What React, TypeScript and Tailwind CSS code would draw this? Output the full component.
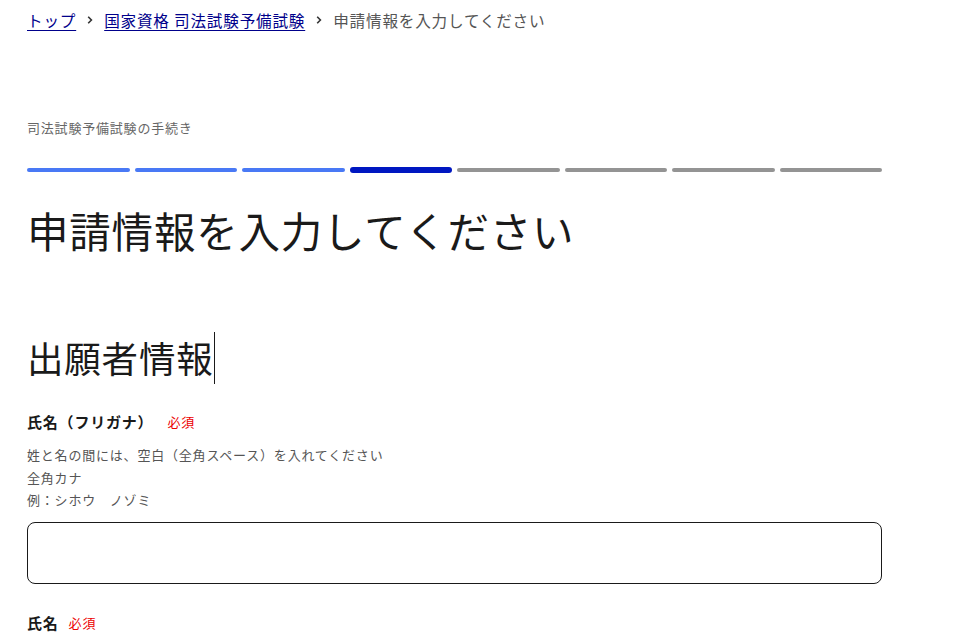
const steps = ["done", "done", "done", "current", "todo", "todo", "todo", "todo"];

function Chevron() {
  return (
    <svg width="8" height="10" viewBox="0 0 8 10" className="mx-[10px] shrink-0" aria-hidden>
      <path d="M2.2 1.8 5.4 5 2.2 8.2" fill="none" stroke="#333" strokeWidth="1.6" />
    </svg>
  );
}

function Required() {
  return <span className="text-[13px] text-[#ec0000] font-normal">必須</span>;
}

export default function App() {
  return (
    <div
      className="min-h-screen bg-white text-[#1a1a1a] tracking-[0.05em]"
      style={{ fontFamily: '"Noto Sans CJK JP", "Noto Sans", sans-serif' }}
    >
      <div className="w-[855px] ml-[27px]">
        <nav className="flex items-center pt-2 text-[15.6px] leading-6">
          <a href="#" className="text-[#00008b] underline underline-offset-[3px]">トップ</a>
          <Chevron />
          <a href="#" className="text-[#00008b] underline underline-offset-[3px]">国家資格 司法試験予備試験</a>
          <Chevron />
          <span className="text-[#555]">申請情報を入力してください</span>
        </nav>

        <p className="mt-[86px] text-[13px] leading-5 text-[#666]">司法試験予備試験の手続き</p>

        <div className="mt-[28px] flex items-center gap-[5px] h-[7px]">
          {steps.map((s, i) => (
            <div
              key={i}
              className={
                s === "current"
                  ? "flex-1 h-[6px] rounded-full bg-[#0017c1]"
                  : s === "done"
                    ? "flex-1 h-[4px] rounded-full bg-[#4979f5]"
                    : "flex-1 h-[4px] rounded-full bg-[#949494]"
              }
            />
          ))}
        </div>

        <h1 className="mt-[29px] text-[41.5px] leading-[56px] font-normal">申請情報を入力してください</h1>

        <h2 className="mt-[74px] text-[36.5px] leading-[52px] font-normal flex items-center">
          出願者情報
          <span className="inline-block w-px h-[52px] bg-[#1a1a1a]" />
        </h2>

        <div className="mt-[26px] flex items-center gap-[14px] leading-6">
          <span className="text-[15px] font-bold">氏名（フリガナ）</span>
          <Required />
        </div>
        <div className="mt-[10px] text-[13px] leading-[22.5px] text-[#555]">
          <p>姓と名の間には、空白（全角スペース）を入れてください</p>
          <p>全角カナ</p>
          <p>例：シホウ　ノゾミ</p>
        </div>
        <input
          type="text"
          className="mt-[10px] block w-full h-[62px] border border-[#1a1a1a] rounded-lg px-4 outline-none"
        />

        <div className="mt-[27px] flex items-center gap-[10px] leading-6">
          <span className="text-[15px] font-bold">氏名</span>
          <Required />
        </div>
      </div>
    </div>
  );
}
